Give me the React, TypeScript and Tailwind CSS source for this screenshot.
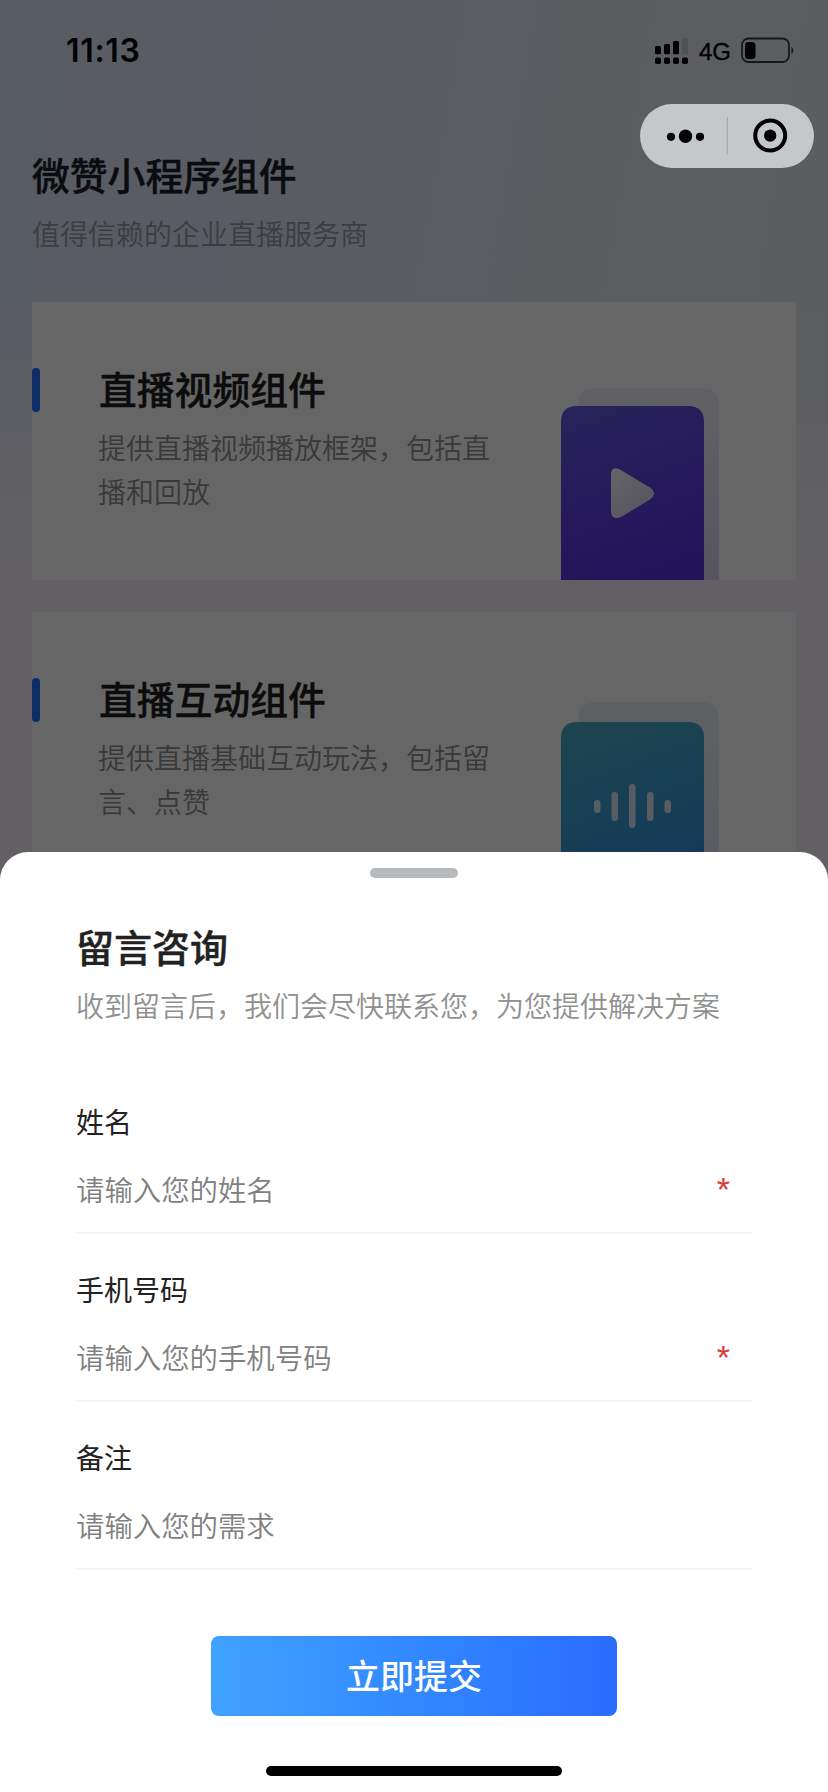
import React from "react";

const fields = [
  { label: "姓名", placeholder: "请输入您的姓名", required: true },
  { label: "手机号码", placeholder: "请输入您的手机号码", required: true },
  { label: "备注", placeholder: "请输入您的需求", required: false },
];

function StatusBar() {
  return (
    <div className="flex h-[88px] items-start justify-between pl-[66px] pr-[33px] pt-[34px]">
      <div className="font-['Inter',sans-serif] text-[32px] font-semibold leading-[34px] tracking-[0.7px] text-[#04060c]">11:13</div>
      <div className="flex items-center pt-0.5">
        <svg width="34" height="28" viewBox="0 0 34 28" className="text-[#04060c]" fill="currentColor">
          <rect x="0" y="9" width="6" height="8.200" rx="1.5" />
          <rect x="9" y="7" width="6" height="10.200" rx="1.5" />
          <rect x="18" y="4" width="6" height="13.200" rx="1.5" />
          <rect x="27" y="1" width="6" height="16.200" rx="1.5" opacity="0.12" />
          <rect x="0" y="20.400" width="6" height="6.6" rx="1.800" />
          <rect x="9" y="20.400" width="6" height="6.6" rx="1.800" />
          <rect x="18" y="20.400" width="6" height="6.6" rx="1.800" />
          <rect x="27" y="20.400" width="6" height="6.6" rx="1.800" />
        </svg>
        <div className="ml-[10px] w-[42px] pt-0.5 font-['Liberation_Sans',sans-serif] text-[24px] leading-[28px] text-[#04060c] [-webkit-text-stroke:0.4px_#04060c]">4G</div>
        <svg width="54" height="28" viewBox="0 0 54 28">
          <rect x="1" y="1.500" width="47" height="23.500" rx="6.5" fill="none" stroke="#353a44" strokeWidth="1.8" />
          <rect x="4" y="5" width="10.5" height="17" rx="3.5" fill="#04060c" />
          <path d="M50.500 9.500 Q54 13.5 50.500 17.500 Z" fill="#353a44" />
        </svg>
      </div>
    </div>
  );
}

function Capsule() {
  return (
    <div className="absolute left-[640px] top-[104px] flex h-16 w-[174px] items-center rounded-full bg-[#c4c8ca]">
      <svg width="174" height="64" viewBox="0 0 174 64" fill="#020304">
        <circle cx="31" cy="32.8" r="4.1" />
        <circle cx="45.5" cy="32.3" r="6.7" />
        <circle cx="60" cy="32.8" r="4.1" />
        <rect x="86.8" y="13" width="1" height="37" fill="#9fa3a6" />
        <circle cx="130.2" cy="31.6" r="15" fill="none" stroke="#020304" strokeWidth="4" />
        <circle cx="130.2" cy="31.6" r="6.2" />
      </svg>
    </div>
  );
}

function VideoArt() {
  return (
    <svg width="158" height="192" viewBox="0 0 158 192" className="mr-[77px] self-end">
      <defs>
        <linearGradient id="violet" x1="0.2" y1="0" x2="0.5" y2="1">
          <stop offset="0" stopColor="#6459e0" />
          <stop offset="0.6" stopColor="#5d3de4" />
          <stop offset="1" stopColor="#5434e4" />
        </linearGradient>
        <linearGradient id="play" x1="0" y1="0" x2="1" y2="1">
          <stop offset="0" stopColor="#fbfafd" />
          <stop offset="1" stopColor="#d3ccef" />
        </linearGradient>
        <linearGradient id="lilac" x1="0" y1="0" x2="0" y2="1">
          <stop offset="0" stopColor="#f3f1fa" />
          <stop offset="1" stopColor="#d9d3ef" />
        </linearGradient>
      </defs>
      <path d="M17 192V18Q17 0 35 0H141Q158 0 158 18V192Z" fill="url(#lilac)" />
      <path d="M0 192V34Q0 18 16 18H127Q143 18 143 34V192Z" fill="url(#violet)" />
      <path d="M50 87Q50 77.500 59 81.500L89 99.500Q97 105.500 89 111.500L61 128.500Q51 133 50 124Z" fill="url(#play)" />
    </svg>
  );
}

function WaveArt() {
  return (
    <svg width="158" height="192" viewBox="0 0 158 192" className="mr-[77px] self-end">
      <defs>
        <linearGradient id="ocean" x1="0.2" y1="0" x2="0.5" y2="1">
          <stop offset="0" stopColor="#48acc4" />
          <stop offset="0.5" stopColor="#3c9fd2" />
          <stop offset="1" stopColor="#358ce0" />
        </linearGradient>
        <linearGradient id="mist" x1="0" y1="0" x2="0" y2="1">
          <stop offset="0" stopColor="#eaf1f4" />
          <stop offset="1" stopColor="#dce7f3" />
        </linearGradient>
      </defs>
      <path d="M17 192V22Q17 4 35 4H141Q158 4 158 22V192Z" fill="url(#mist)" />
      <path d="M0 192V40Q0 24 16 24H127Q143 24 143 40V192Z" fill="url(#ocean)" />
      <g fill="#d9e8f4">
        <rect x="33" y="102" width="6.500" height="13" rx="3.2" />
        <rect x="50.500" y="94" width="6.500" height="29" rx="3.2" />
        <rect x="68" y="86" width="6.500" height="44" rx="3.2" />
        <rect x="86" y="94" width="6.500" height="29" rx="3.2" />
        <rect x="103.500" y="102" width="6.500" height="13" rx="3.2" />
      </g>
    </svg>
  );
}

function FeatureCard({ title, desc, art }: { title: string; desc: string; art: React.ReactNode }) {
  return (
    <section className="flex h-[278px] shrink-0 bg-white">
      <div className="mt-[66px] h-11 w-2 rounded-full bg-[#2470ff]" />
      <div className="ml-[59px] mt-[62px] w-[394px]">
        <h2 className="text-[37.8px] font-medium leading-[48px] text-[#1f1f1f] [-webkit-text-stroke:0.4px_#1f1f1f]">{title}</h2>
        <p className="-ml-px mt-[13px] text-[28px] font-[350] leading-[44px] text-[#909090]">{desc}</p>
      </div>
      <div className="ml-auto flex">{art}</div>
    </section>
  );
}

function ConsultSheet() {
  return (
    <div className="absolute inset-x-0 bottom-0 flex h-[940px] flex-col rounded-t-[28px] bg-white px-[76px]">
      <div className="mt-4 h-2.5 w-[88px] self-center rounded-full bg-[#b6babd]" />
      <h2 className="mt-[44px] text-[38px] font-medium leading-[48px] text-[#222] [-webkit-text-stroke:0.4px_#222]">留言咨询</h2>
      <p className="mt-[13px] whitespace-nowrap text-[28px] font-[350] leading-[44px] text-[#909090]">
        收到留言后，我们会尽快联系您，为您提供解决方案
      </p>
      <form className="mt-[43px] flex flex-col">
        {fields.map((f) => (
          <div key={f.label} className="h-[168px]">
            <label className="block pt-[29px] text-[28px] leading-[44px] text-[#222]">{f.label}</label>
            <div className="mt-4 flex h-[75px] items-start justify-between border-b-2 border-[#f4f4f4] pr-[22px] pt-2">
              <span className="text-[28.4px] font-[350] leading-[44px] text-[#808080]">{f.placeholder}</span>
              {f.required && <span className="font-['Liberation_Sans',sans-serif] text-[34px] leading-[45px] text-[#dc3838]">*</span>}
            </div>
          </div>
        ))}
      </form>
      <button className="mt-[62px] h-20 w-[406px] shrink-0 self-center rounded-lg bg-linear-to-r from-[#40a2ff] to-[#2a6cff] pb-0.5 text-[34px] font-medium leading-[44px] text-white">
        立即提交
      </button>
      <div className="mt-[50px] h-2.5 w-[296px] shrink-0 self-center rounded-full bg-black" />
    </div>
  );
}

export default function App() {
  return (
    <main className="relative h-[1792px] w-[828px] overflow-hidden bg-[#f4f1f9] font-['Noto_Sans_CJK_SC',sans-serif]">
      <div className="h-full bg-[linear-gradient(180deg,transparent_0,transparent_300px,#f4f1f9_560px),linear-gradient(100deg,#dde5f8_0,#e3e9f0_60%,#e2e6f0_100%)]">
        <StatusBar />
        <header className="pl-8 pt-[62px]">
          <h1 className="text-[37.8px] font-medium leading-[48px] text-[#1a1e28] [-webkit-text-stroke:0.4px_#1a1e28]">微赞小程序组件</h1>
          <p className="mt-[13px] text-[28px] font-[350] leading-[44px] text-[#959aa6]">值得信赖的企业直播服务商</p>
        </header>
        <div className="mt-[47px] flex flex-col gap-8 px-8">
          <FeatureCard title="直播视频组件" desc="提供直播视频播放框架，包括直播和回放" art={<VideoArt />} />
          <FeatureCard title="直播互动组件" desc="提供直播基础互动玩法，包括留言、点赞" art={<WaveArt />} />
        </div>
      </div>
      <div className="absolute inset-0 bg-black/60" />
      <Capsule />
      <ConsultSheet />
    </main>
  );
}
